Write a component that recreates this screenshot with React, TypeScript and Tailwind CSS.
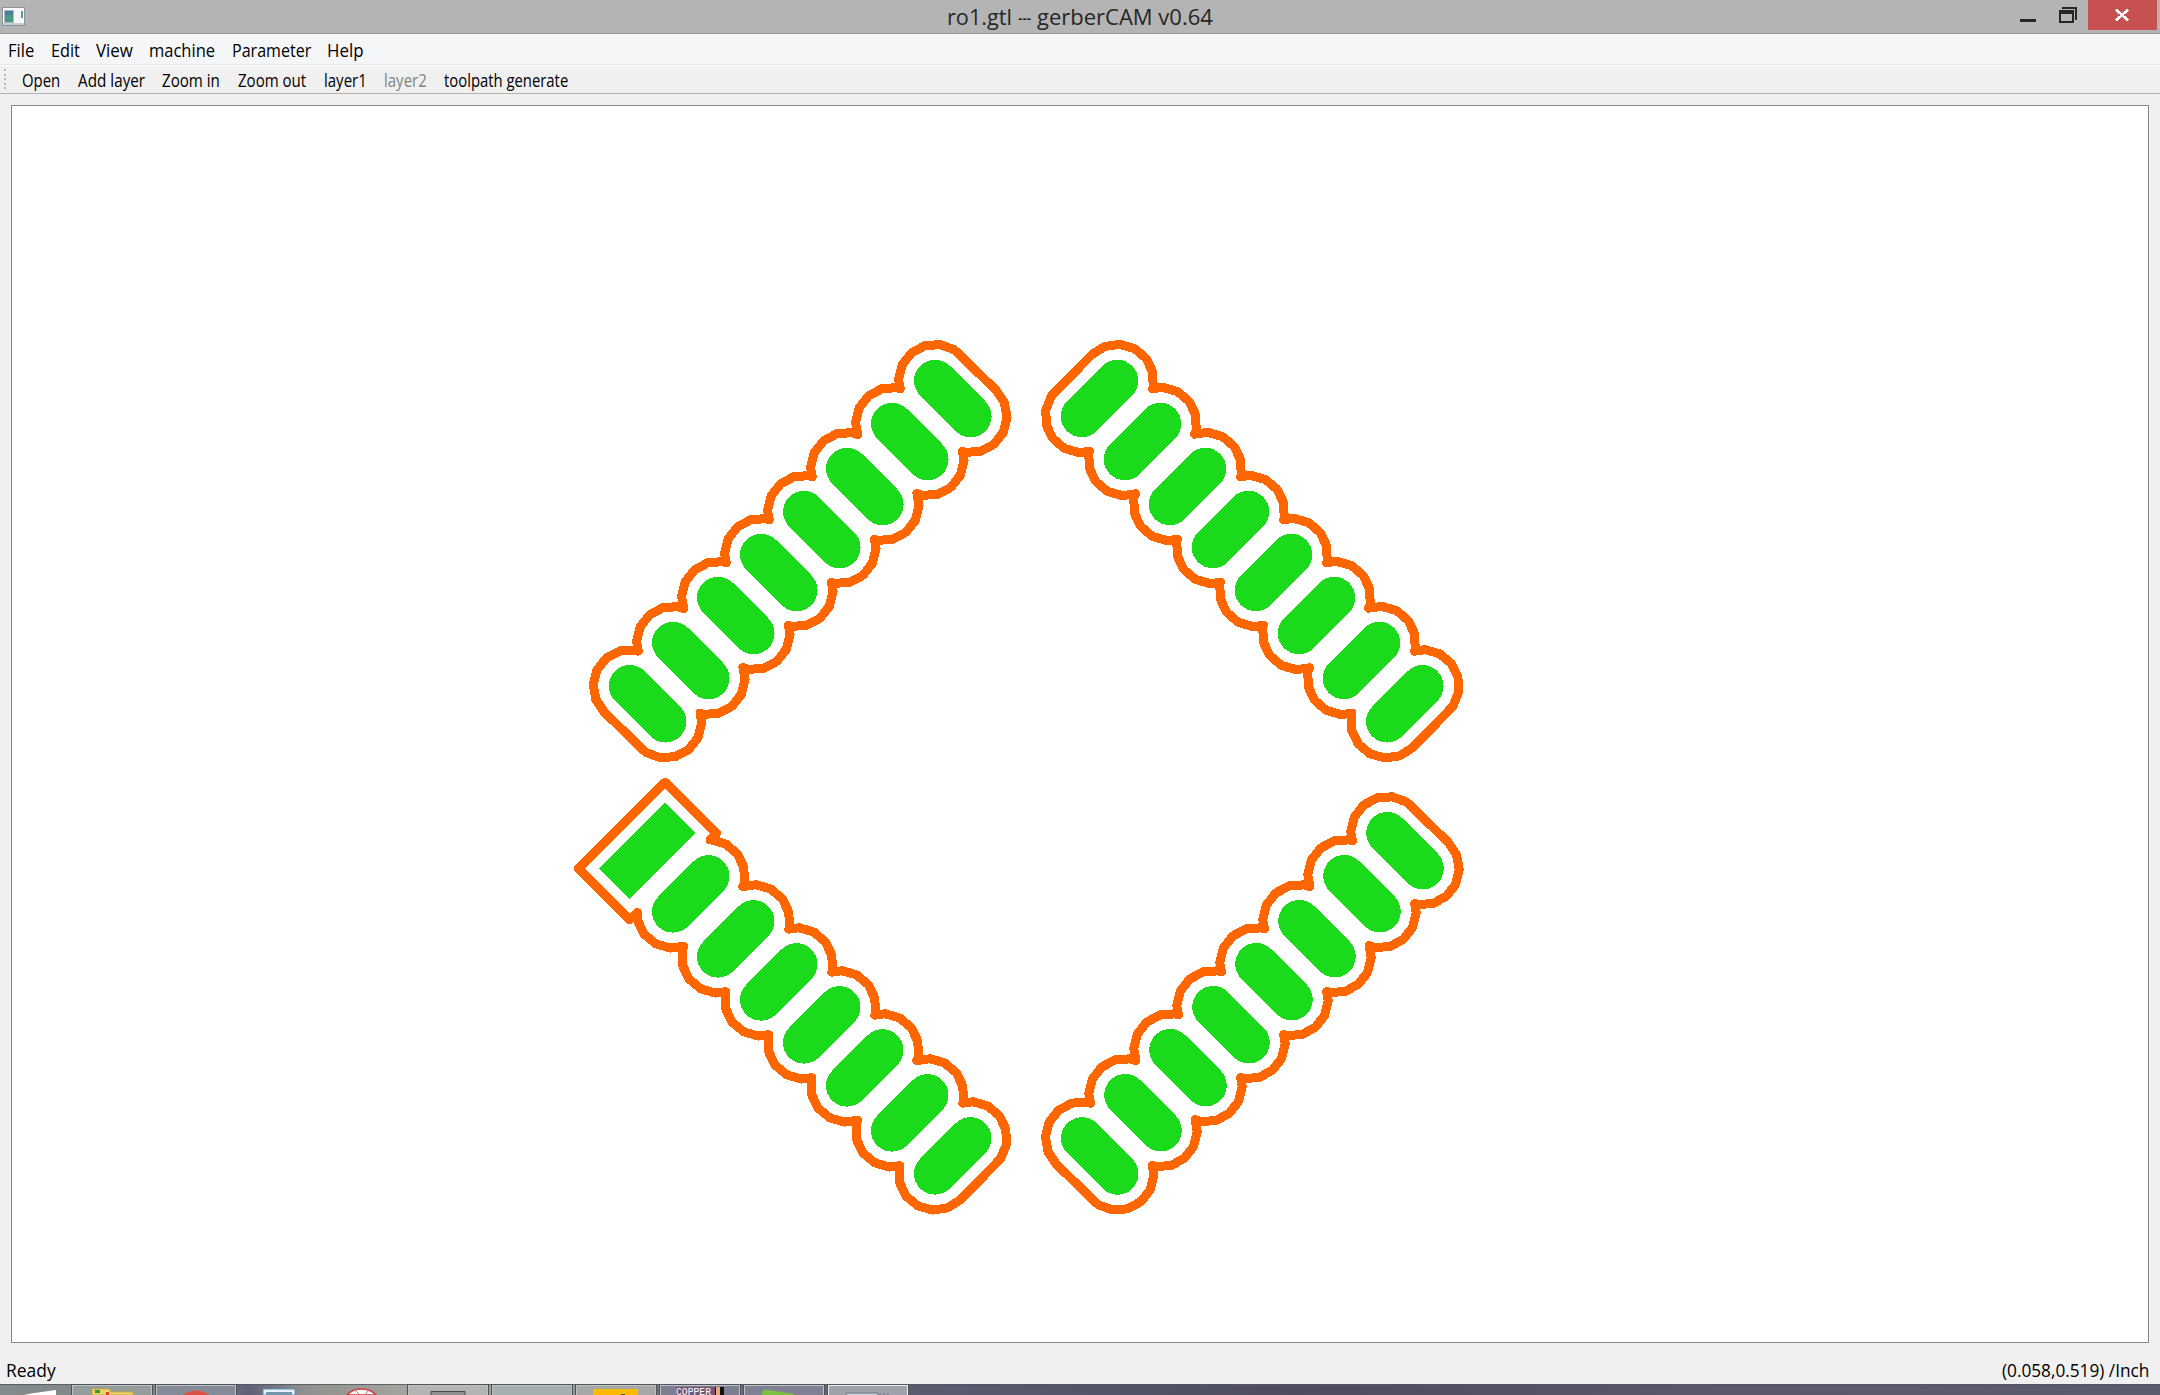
import { useLayoutEffect, useRef, useState } from 'react';

type Pt = [number, number];

const OFFSETS = [0, 43, 88, 131, 174, 217, 262, 305.3];
const LOWER_LEFT = [0, 45, 88, 131, 174, 219, 262];
const HALF = 17.75;
const PAD_R = 21;
const CUT_R = 36.5;

interface Pad {
  x: number;
  y: number;
  slope: 1 | -1;
}

const chains: Pad[][] = [
  OFFSETS.map((o) => ({ x: 952.8 - o, y: 398.5 + o, slope: 1 })),
  OFFSETS.map((o) => ({ x: 1099.5 + o, y: 398.5 + o, slope: -1 })),
  LOWER_LEFT.map((o) => ({ x: 690.7 + o, y: 893.9 + o, slope: -1 })),
  OFFSETS.map((o) => ({ x: 1405 - o, y: 850.7 + o, slope: 1 })),
];

const squarePad: Pt[] = [[665, 802.8], [695.4, 833.1], [629.8, 898.9], [599.2, 868.5]];
const squareCut: Pt[] = [[665, 782.2], [716.5, 833.4], [629.8, 919.8], [578.4, 868.5]];

// Sixteen-sided approximation of a capsule, eight vertices per rounded end.
function capsule({ x, y, slope }: Pad): Pt[] {
  const pts: Pt[] = [];
  const ends: [number, number, number][] =
    slope === 1
      ? [[x - HALF, y - HALF, 226], [x + HALF, y + HALF, 46]]
      : [[x + HALF, y - HALF, 134], [x - HALF, y + HALF, 314]];
  for (const [cx, cy, start] of ends) {
    for (let k = 0; k < 8; k++) {
      const a = ((start - 24 * k) * Math.PI) / 180;
      pts.push([cx + CUT_R * Math.cos(a), cy - CUT_R * Math.sin(a)]);
    }
  }
  return pts;
}

// Parameter range of segment a-b that lies inside a convex clockwise polygon.
function insideRange(a: Pt, b: Pt, poly: Pt[]): [number, number] | null {
  let lo = 0;
  let hi = 1;
  for (let i = 0; i < poly.length; i++) {
    const p = poly[i];
    const q = poly[(i + 1) % poly.length];
    const ex = q[0] - p[0];
    const ey = q[1] - p[1];
    const da = ex * (a[1] - p[1]) - ey * (a[0] - p[0]);
    const db = ex * (b[1] - p[1]) - ey * (b[0] - p[0]);
    if (da < 0 && db < 0) return null;
    if (da < 0) lo = Math.max(lo, da / (da - db));
    else if (db < 0) hi = Math.min(hi, da / (da - db));
  }
  return lo < hi ? [lo, hi] : null;
}

function unionOutline(polys: Pt[][]): string {
  const out: string[] = [];
  polys.forEach((poly, n) => {
    poly.forEach((a, i) => {
      const b = poly[(i + 1) % poly.length];
      let spans: [number, number][] = [[0, 1]];
      polys.forEach((other, m) => {
        if (m === n) return;
        const r = insideRange(a, b, other);
        if (!r) return;
        spans = spans.flatMap(([s, e]) => {
          const kept: [number, number][] = [];
          if (r[0] > s) kept.push([s, Math.min(e, r[0])]);
          if (r[1] < e) kept.push([Math.max(s, r[1]), e]);
          return kept;
        });
      });
      const at = (t: number) =>
        `${(a[0] + (b[0] - a[0]) * t).toFixed(2)} ${(a[1] + (b[1] - a[1]) * t).toFixed(2)}`;
      spans.forEach(([s, e]) => out.push(`M${at(s)}L${at(e)}`));
    });
  });
  return out.join('');
}

const toolpaths = chains.map((c, i) =>
  unionOutline(i === 2 ? [squareCut, ...c.map(capsule)] : c.map(capsule)),
);

function Board() {
  return (
    <svg className="block h-full w-full" viewBox="12 106 2136 1236" shapeRendering="crispEdges">
      {toolpaths.map((d, i) => (
        <path key={i} d={d} fill="none" stroke="#ff6600" strokeWidth={9} strokeLinecap="round" />
      ))}
      <polygon points={squarePad.map((p) => p.join(',')).join(' ')} fill="#1bda1b" />
      {chains.flat().map(({ x, y, slope }, i) => (
        <line
          key={i}
          x1={x - HALF}
          y1={y - HALF * slope}
          x2={x + HALF}
          y2={y + HALF * slope}
          stroke="#1bda1b"
          strokeWidth={PAD_R * 2}
          strokeLinecap="round"
        />
      ))}
    </svg>
  );
}

// Text squeezed horizontally to an exact width.
function Label({ text, width }: { text: string; width: number }) {
  const ref = useRef<HTMLSpanElement>(null);
  const [scale, setScale] = useState(1);
  useLayoutEffect(() => {
    if (ref.current) setScale(width / ref.current.offsetWidth);
  }, [text, width]);
  return (
    <span className="block shrink-0 whitespace-nowrap" style={{ width }}>
      <span ref={ref} className="inline-block origin-left" style={{ transform: `scaleX(${scale})` }}>
        {text}
      </span>
    </span>
  );
}

function AppIcon() {
  return (
    <svg className="block h-[19px] w-[23px]" viewBox="0 0 23 19" shapeRendering="crispEdges">
      <rect x="0.5" y="0.5" width="22" height="18" fill="#fdfdfd" stroke="#8b949c" />
      <rect x="1" y="16" width="21" height="2" fill="#c3d0d8" />
      <rect x="2" y="3" width="10" height="13" fill="#a9b4c4" />
      <rect x="3" y="4" width="8" height="11" fill="#4b9a80" />
      <rect x="3" y="4" width="8" height="4" fill="#47809a" />
      <rect x="13" y="3" width="7" height="13" fill="#f5f5f5" />
      <rect x="19" y="4" width="2" height="7" fill="#58a08c" />
    </svg>
  );
}

function TitleBar() {
  return (
    <header className="flex h-[34px] justify-between border-b border-[#97979d] bg-[#b4b4b4]">
      <div className="w-[216px] pt-[7px] pl-0.5">
        <AppIcon />
      </div>
      <div className="flex gap-1.5 text-[21px] leading-[34px] text-[#262626]">
        <Label text="ro1.gtl" width={65} />
        <Label text="---" width={13} />
        <Label text="gerberCAM v0.64" width={176} />
      </div>
      <div className="flex w-[216px] justify-end">
        <svg className="block h-[33px] w-[144px]" viewBox="2016 0 144 33" shapeRendering="crispEdges">
          <rect x="2020" y="19" width="16" height="3" fill="#262626" />
          <path d="M2062 7h15v13h-2V9h-13z" fill="#262626" />
          <path d="M2059 10h15v13h-15zM2061 14v7h11v-7z" fill="#262626" fillRule="evenodd" />
          <rect x="2088" y="0" width="69" height="30" fill="#c75050" />
          <path d="M2116 9.500l12 11M2128 9.500l-12 11" stroke="#fff" strokeWidth="2.600" />
        </svg>
      </div>
    </header>
  );
}

function MenuBar() {
  return (
    <nav className="flex h-[30px] gap-[16.500px] bg-[#f5f6f8] pl-2 text-[18.500px] leading-[32px] text-black">
      <Label text="File" width={26} />
      <Label text="Edit" width={29} />
      <Label text="View" width={36.5} />
      <Label text="machine" width={66} />
      <Label text="Parameter" width={79} />
      <Label text="Help" width={36.5} />
    </nav>
  );
}

function ToolBar() {
  return (
    <div className="flex h-[28px] gap-[17.500px] border-b border-[#b3b3b3] bg-[#f0f0f0] text-[18px] leading-[28px] text-black">
      <div className="-mr-[13.500px] flex w-[18px] flex-col gap-[2.500px] pt-[3px] pl-1">
        {[0, 1, 2, 3, 4].map((n) => (
          <i key={n} className="block h-0.5 w-0.5 bg-[#b8b8b8]" />
        ))}
      </div>
      <Label text="Open" width={38} />
      <Label text="Add layer" width={67} />
      <Label text="Zoom in" width={58} />
      <Label text="Zoom out" width={68.5} />
      <Label text="layer1" width={42.5} />
      <span className="text-[#838383]">
        <Label text="layer2" width={42.5} />
      </span>
      <Label text="toolpath generate" width={124.5} />
    </div>
  );
}

function Taskbar() {
  return (
    <footer className="h-[11px]">
      <svg className="block h-[11px] w-[2160px]" viewBox="0 0 2160 11">
        <defs>
          <linearGradient id="bar" x1="0" x2="1" y1="0" y2="0">
            <stop offset="0" stopColor="#848b8c" />
            <stop offset="0.090" stopColor="#7d838a" />
            <stop offset="0.115" stopColor="#5f6077" />
            <stop offset="0.140" stopColor="#8d908d" />
            <stop offset="0.185" stopColor="#a3a39d" />
            <stop offset="0.260" stopColor="#9aa09f" />
            <stop offset="0.300" stopColor="#6e7180" />
            <stop offset="0.420" stopColor="#5a5c70" />
            <stop offset="0.600" stopColor="#4e4d60" />
            <stop offset="0.800" stopColor="#5a596a" />
            <stop offset="1" stopColor="#5b5c6c" />
          </linearGradient>
        </defs>
        <rect width="2160" height="11" fill="url(#bar)" />
        {[
          [72, '#959c9c'],
          [156, '#858b98'],
          [408, '#b3b5b2'],
          [492, '#a4b0af'],
          [576, '#a5a8a5'],
          [660, '#7d7e90'],
          [744, '#7e8294'],
          [828, '#9fa2ab'],
        ].map(([x, fill]) => (
          <g key={x}>
            <rect x={Number(x) - 0.5} y="0.5" width="81" height="14" fill="none" stroke="#4d5158" />
            <rect x={Number(x) + 0.5} y="1.500" width="79" height="14" fill={String(fill)} stroke={x === 828 ? '#eeeeee' : '#bcc1c3'} />
          </g>
        ))}
        <path d="M24 11l10-2 22-3v5z" fill="#fff" />
        <path d="M92 11V5h17l2 3h22v3z" fill="#ecd36c" stroke="#c9a83c" />
        <path d="M95 6h5v3h-5z" fill="#2d9d48" />
        <path d="M106 8h3v3h-3z" fill="#d94a2b" />
        <path d="M183 11c6-6 20-6 26 0z" fill="#dc5045" />
        <path d="M263 5h32v6h-32z" fill="#e7f1f7" stroke="#5c8fb8" />
        <path d="M266 8h26v3h-26z" fill="#7296aa" />
        <path d="M347 11c7-8 22-8 29 0z" fill="#f6f6f6" stroke="#d33f3f" strokeWidth="1.500" />
        <path d="M356 7l4 4M368 7l-3 4" stroke="#8b8b8b" />
        <path d="M431 11V7.500h34V11" fill="#8f9190" stroke="#4a4a4a" />
        <path d="M593 5h45v6h-45z" fill="#ffb900" />
        <path d="M620 11l2-1h3v1z" fill="#5a4a1c" />
        <path d="M676 3h48v8h-48z" fill="#765574" />
        <path d="M715 3h9v8h-9z" fill="#111" />
        <path d="M716 3h4v8h-4z" fill="#eba57c" />
        <path d="M762 11c0-5 2-6 6-5l26 4v1z" fill="#7ac142" />
        <path d="M846 11V9h32v2M880 9v2M884 9v2M888 9v2" fill="#c7ced6" stroke="#6d7887" />
        <text x="676" y="11" fill="#fff" fontFamily="Liberation Mono" fontSize="10" textLength="35" lengthAdjust="spacingAndGlyphs">COPPER</text>
        <rect width="2160" height="1" fill="#52555c" opacity="0.800" />
      </svg>
    </footer>
  );
}

export default function App() {
  return (
    <div className="flex h-[1395px] w-[2160px] flex-col overflow-hidden bg-[#f0f0f0] font-['Open_Sans',sans-serif]">
      <TitleBar />
      <MenuBar />
      <div className="h-0.5 border-t border-[#e5e5e5] bg-white" />
      <ToolBar />
      <main className="mx-[11px] mt-[11px] h-[1238px] border border-[#828790] bg-white">
        <Board />
      </main>
      <div className="flex h-[41px] justify-between pt-2 pr-[11px] pl-1.5 text-[18.500px] leading-[38px] text-black">
        <Label text="Ready" width={50} />
        <Label text="(0.058,0.519) /Inch" width={147} />
      </div>
      <Taskbar />
    </div>
  );
}
